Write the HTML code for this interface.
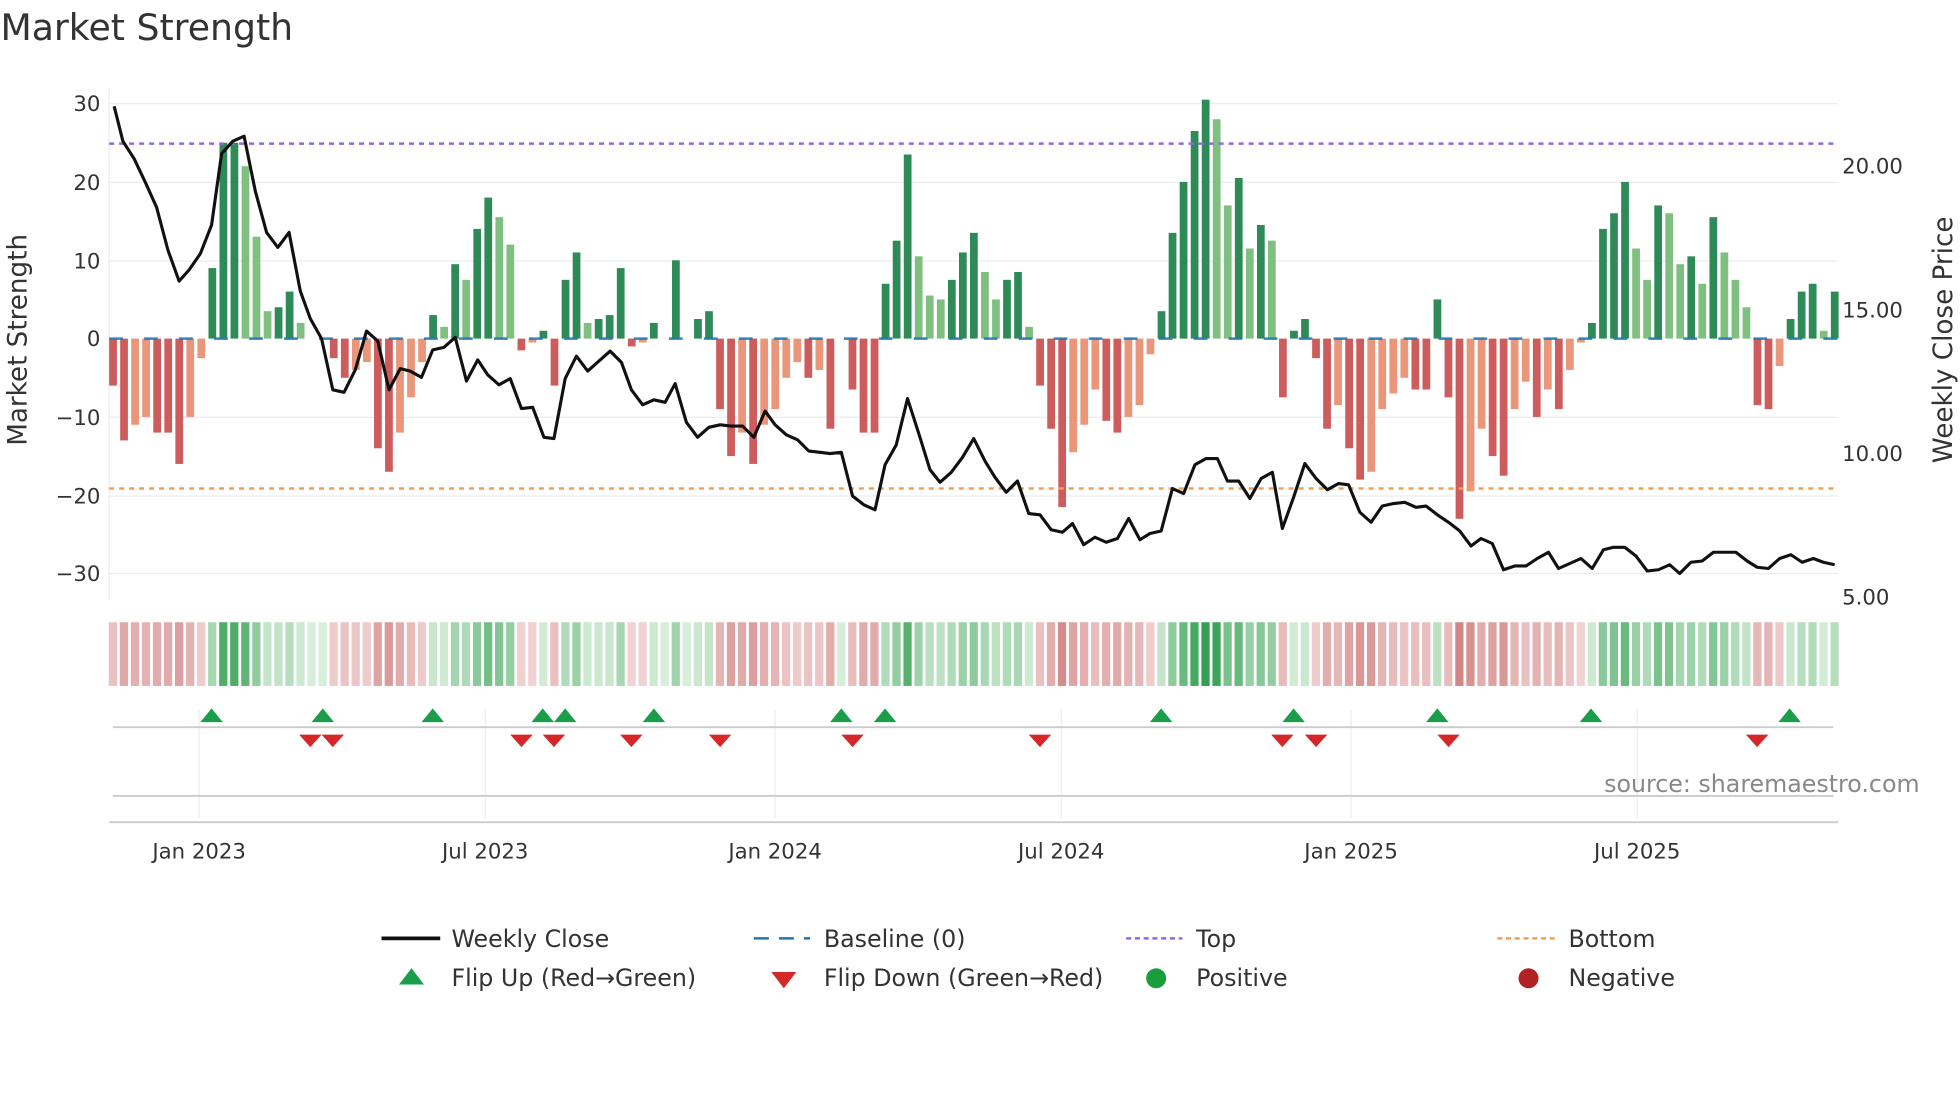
<!DOCTYPE html>
<html><head><meta charset="utf-8"><style>
html,body{margin:0;padding:0;background:#fff;width:1960px;height:1102px;overflow:hidden}
svg{display:block;font-family:"DejaVu Sans","Liberation Sans",sans-serif}
</style></head><body>
<svg id="s" width="1960" height="1102" viewBox="0 0 1568 882" xmlns="http://www.w3.org/2000/svg">
<text x="0" y="32" font-size="29" fill="#333">Market Strength</text>
<g stroke="#ebedf2" stroke-width="1">
<line x1="87" x2="1471" y1="83" y2="83"/><line x1="87" x2="1471" y1="146" y2="146"/><line x1="87" x2="1471" y1="209" y2="209"/><line x1="87" x2="1471" y1="334" y2="334"/><line x1="87" x2="1471" y1="397" y2="397"/><line x1="87" x2="1471" y1="459" y2="459"/>
<line x1="87" x2="87" y1="70" y2="480"/>
</g>
<g font-size="17" fill="#333" text-anchor="end">
<text x="80" y="89">30</text><text x="80" y="152">20</text><text x="80" y="215">10</text><text x="80" y="277">0</text><text x="80" y="340">−10</text><text x="80" y="403">−20</text><text x="80" y="465">−30</text>
</g>
<g font-size="17" fill="#333">
<text x="1474" y="139">20.00</text><text x="1474" y="254">15.00</text><text x="1474" y="369">10.00</text><text x="1474" y="484">5.00</text>
</g>
<text transform="translate(21,272) rotate(-90)" font-size="21" fill="#333" text-anchor="middle">Market Strength</text>
<text transform="translate(1562,272) rotate(-90)" font-size="21" fill="#333" text-anchor="middle">Weekly Close Price</text>
<g id="bars"></g>
<line x1="87" x2="1471" y1="271" y2="271" stroke="#1f77b4" stroke-width="2" stroke-dasharray="11,17" opacity="0.9"/>
<line x1="87" x2="1471" y1="115" y2="115" stroke="#9467e0" stroke-width="2" stroke-dasharray="4,4"/>
<line x1="87" x2="1471" y1="391" y2="391" stroke="#f0a050" stroke-width="2" stroke-dasharray="4,4"/>
<polyline id="pl" fill="none" stroke="#111" stroke-width="2.5" stroke-linejoin="round"/>
<g id="heat"></g>
<g stroke="#eee"><line x1="159" x2="159" y1="568" y2="655"/><line x1="388" x2="388" y1="568" y2="655"/><line x1="620" x2="620" y1="568" y2="655"/><line x1="849" x2="849" y1="568" y2="655"/><line x1="1081" x2="1081" y1="568" y2="655"/><line x1="1310" x2="1310" y1="568" y2="655"/></g>
<line x1="90" x2="1467" y1="582" y2="582" stroke="#ccc" stroke-width="1.5"/>
<line x1="90" x2="1467" y1="637" y2="637" stroke="#ccc" stroke-width="1.5"/>
<line x1="87" x2="1471" y1="658" y2="658" stroke="#ccc" stroke-width="1.5"/>
<g id="mk"></g>
<text x="1536" y="634" font-size="19" fill="#888" text-anchor="end">source: sharemaestro.com</text>
<g font-size="17" fill="#333" text-anchor="middle">
<text x="159" y="687">Jan 2023</text><text x="388" y="687">Jul 2023</text><text x="620" y="687">Jan 2024</text><text x="849" y="687">Jul 2024</text><text x="1081" y="687">Jan 2025</text><text x="1310" y="687">Jul 2025</text>
</g>
<g font-size="19" fill="#333">
<line x1="305" x2="352" y1="751" y2="751" stroke="#111" stroke-width="3"/><text x="361" y="758">Weekly Close</text>
<line x1="603" x2="648" y1="751" y2="751" stroke="#1f77b4" stroke-width="2" stroke-dasharray="12,8"/><text x="659" y="758">Baseline (0)</text>
<line x1="901" x2="946" y1="751" y2="751" stroke="#9467e0" stroke-width="2" stroke-dasharray="4,3"/><text x="957" y="758">Top</text>
<line x1="1198" x2="1244" y1="751" y2="751" stroke="#f0a050" stroke-width="2" stroke-dasharray="4,3"/><text x="1255" y="758">Bottom</text>
<polygon points="319,788 329,775 339,788" fill="#1a9e4a"/><text x="361" y="789">Flip Up (Red→Green)</text>
<polygon points="617,778 627,791 637,778" fill="#d62728"/><text x="659" y="789">Flip Down (Green→Red)</text>
<circle cx="925" cy="783" r="8" fill="#1a9e3a"/><text x="957" y="789">Positive</text>
<circle cx="1223" cy="783" r="8" fill="#b22222"/><text x="1255" y="789">Negative</text>
</g>
</svg>
<script>
var v=[-6,-13,-11,-10,-12,-12,-16,-10,-2.5,9,25,25,22,13,3.5,4,6,2,0,0,-2.5,-5,-4,-3,-14,-17,-12,-7.5,-3,3,1.5,9.5,7.5,14,18,15.5,12,-1.5,-0.5,1,-6,7.5,11,2,2.5,3,9,-1,-0.5,2,0,10,0,2.5,3.5,-9,-15,-12,-16,-11,-9,-5,-3,-5,-4,-11.5,0,-6.5,-12,-12,7,12.5,23.5,10.5,5.5,5,7.5,11,13.5,8.5,5,7.5,8.5,1.5,-6,-11.5,-21.5,-14.5,-11,-6.5,-10.5,-12,-10,-8.5,-2,3.5,13.5,20,26.5,30.5,28,17,20.5,11.5,14.5,12.5,-7.5,1,2.5,-2.5,-11.5,-8.5,-14,-18,-17,-9,-7,-5,-6.5,-6.5,5,-7.5,-23,-19.5,-11.5,-15,-17.5,-9,-5.5,-10,-6.5,-9,-4,-0.5,2,14,16,20,11.5,7.5,17,16,9.5,10.5,7,15.5,11,7.5,4,-8.5,-9,-3.5,2.5,6,7,1,6];
var p=[[91,85],[98,113],[107,127],[116,146],[125,166],[134,200],[143,225],[151,216],[160,203],[169,180],[177,123],[186,113],[195,109],[204,153],[213,186],[222,198],[231,186],[240,233],[248,255],[257,271],[266,312],[275,314],[284,296],[293,265],[302,273],[311,312],[320,295],[328,297],[337,302],[346,280],[355,278],[364,270],[373,305],[382,288],[390,300],[399,308],[408,303],[417,327],[426,326],[435,350],[443,351],[452,303],[461,285],[470,297],[479,289],[488,281],[497,290],[505,312],[514,324],[523,320],[532,322],[540,307],[549,338],[558,350],[567,342],[576,340],[585,341],[594,341],[603,350],[612,329],[620,340],[629,348],[638,352],[647,361],[656,362],[664,363],[673,362],[682,397],[691,404],[700,408],[708,372],[717,356],[726,319],[735,347],[744,376],[752,386],[761,378],[770,366],[779,351],[788,369],[796,382],[805,394],[814,385],[823,411],[832,412],[841,424],[850,426],[858,419],[867,436],[876,430],[885,434],[894,431],[903,415],[912,432],[920,427],[929,425],[938,391],[947,395],[956,372],[965,367],[974,367],[982,385],[991,385],[1000,399],[1009,383],[1018,378],[1026,423],[1035,398],[1044,371],[1053,383],[1062,392],[1071,387],[1079,388],[1088,410],[1097,418],[1106,405],[1115,403],[1124,402],[1133,406],[1141,405],[1150,412],[1159,418],[1168,425],[1177,437],[1185,431],[1194,435],[1203,456],[1212,453],[1221,453],[1230,447],[1239,442],[1247,455],[1256,451],[1265,447],[1274,455],[1283,440],[1291,438],[1300,438],[1309,445],[1318,457],[1327,456],[1336,452],[1344,459],[1353,450],[1362,449],[1371,442],[1380,442],[1389,442],[1398,449],[1406,454],[1415,455],[1424,447],[1433,444],[1442,450],[1451,447],[1459,450],[1468,452]];
var NS="http://www.w3.org/2000/svg",n=v.length,step=(1468-90)/(n-1);
function r(g,x,y,w,h,f){var e=document.createElementNS(NS,"rect");e.setAttribute("x",x);e.setAttribute("y",y);e.setAttribute("width",w);e.setAttribute("height",h);e.setAttribute("fill",f);document.getElementById(g).appendChild(e);}
for(var i=0;i<n;i++){var x=90+i*step,a=v[i],pr=i?v[i-1]:0,h=Math.abs(a)*6.27;
 var dark=Math.abs(a)>=Math.abs(pr)||(a>0)!=(pr>0);
 var c=a>=0?(dark?"#2e8b57":"#7fbf7f"):(dark?"#cd5c5c":"#e9967a");
 if(h>0.5)r("bars",x-3,a>=0?271-h:271,6.2,h,c);
 var t=Math.min(Math.abs(a)/30,1),col;
 if(a>=0){col="rgb("+Math.round(215-165*t)+","+Math.round(238-78*t)+","+Math.round(218-138*t)+")";}
 else{col="rgb("+Math.round(242-42*t)+","+Math.round(212-102*t)+","+Math.round(212-102*t)+")";}
 r("heat",x-3.3,498,6.6,51,col);}
document.getElementById("pl").setAttribute("points",p.map(function(q){return q.join(",")}).join(" "));
var up=[169,258,346,434,452,523,673,708,929,1035,1150,1273,1432],dn=[248,266,417,443,505,576,682,832,1026,1053,1159,1406],mk=document.getElementById("mk");
up.forEach(function(x){var e=document.createElementNS(NS,"polygon");e.setAttribute("points",(x-9)+",578 "+x+",567 "+(x+9)+",578");e.setAttribute("fill","#1a9e4a");mk.appendChild(e);});
dn.forEach(function(x){var e=document.createElementNS(NS,"polygon");e.setAttribute("points",(x-9)+",588 "+x+",598 "+(x+9)+",588");e.setAttribute("fill","#d62728");mk.appendChild(e);});
</script>
</body></html>
